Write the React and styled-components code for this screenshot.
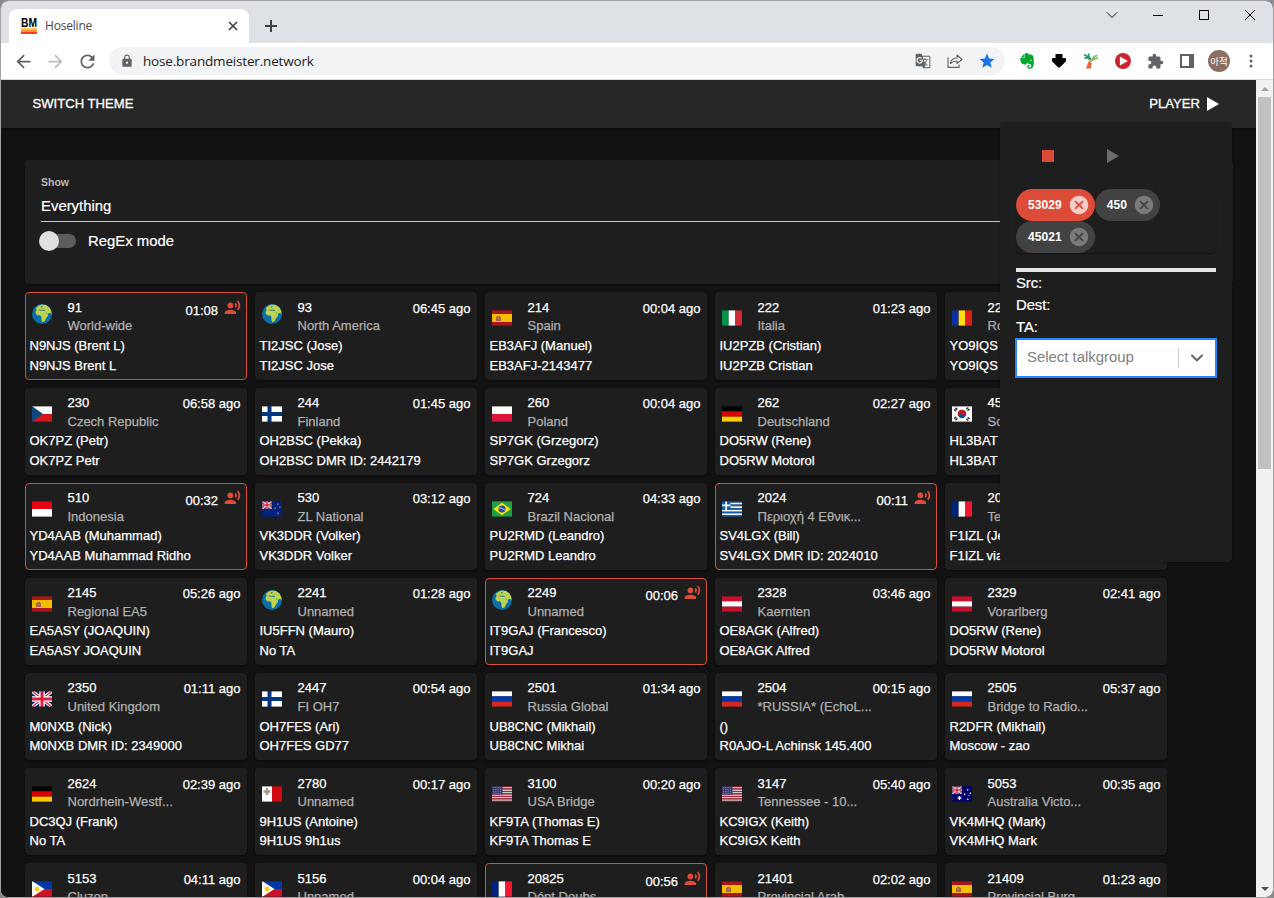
import React from 'react'
import styled, { createGlobalStyle } from 'styled-components'
import {
  MdArrowBack,
  MdArrowForward,
  MdRefresh,
  MdLock,
  MdGTranslate,
  MdStar,
  MdExtension,
  MdRecordVoiceOver,
  MdCancel,
} from 'react-icons/md'
import { SiEvernote } from 'react-icons/si'


const GlobalStyle = createGlobalStyle`
  * { box-sizing: border-box; }
  body {
    margin: 0;
    overflow: hidden;
    background: #8a8a8c;
    font-family: "Liberation Sans", Arial, sans-serif;
  }
`

const Window = styled.div`
  width: 1274px;
  height: 898px;
  display: flex;
  flex-direction: column;
  overflow: hidden;
  border: 1px solid #a3a3a5;
  border-radius: 8px;
  background: #121212;
`

/* browser chrome */

const TabStrip = styled.div`
  height: 42px;
  flex: none;
  display: flex;
  align-items: flex-end;
  background: #dee1e6;
  padding-left: 8px;
`

const Tab = styled.div`
  width: 240px;
  height: 34px;
  display: flex;
  align-items: center;
  padding: 0 10px 0 12px;
  border-radius: 8px 8px 0 0;
  background: #fff;
`

const TabTitle = styled.span`
  flex: 1;
  margin-left: 8px;
  padding-bottom: 1px;
  font: 12px "Open Sans", sans-serif;
  letter-spacing: -0.2px;
  color: #45484c;
`

const NewTab = styled.div`
  width: 44px;
  height: 34px;
  display: flex;
  align-items: center;
  justify-content: center;
`

const WindowButtons = styled.div`
  margin-left: auto;
  align-self: flex-start;
  display: flex;
`

const WindowButton = styled.div`
  width: 46px;
  height: 28px;
  display: flex;
  align-items: center;
  justify-content: center;
`

const Toolbar = styled.div`
  height: 37px;
  flex: none;
  display: flex;
  align-items: center;
  padding-left: 6px;
  background: #fff;
  border-bottom: 1px solid #d5d7da;
`

const Slot = styled.div`
  width: 32px;
  height: 28px;
  flex: none;
  display: flex;
  align-items: center;
  justify-content: center;
  color: ${props => props.$color || '#5f6368'};
`

const Omnibox = styled.div`
  width: 896px;
  height: 28px;
  margin: 0 6px;
  display: flex;
  align-items: center;
  padding-left: 10px;
  padding-right: 2px;
  border-radius: 14px;
  background: #f1f3f4;
`

const Lock = styled.div`
  width: 16px;
  display: flex;
  justify-content: center;
  color: #5f6368;
`

const Url = styled.span`
  flex: 1;
  margin-left: 8px;
  font: 13.5px "Open Sans", sans-serif;
  letter-spacing: -0.17px;
  color: #202124;
`

const Avatar = styled.div`
  width: 22px;
  height: 22px;
  display: flex;
  align-items: center;
  justify-content: center;
  border-radius: 50%;
  background: #8d6e63;
  color: #fff;
  font: 9.5px "Noto Sans CJK KR", sans-serif;
`

/* page */

const Viewport = styled.div`
  flex: 1;
  min-height: 0;
  display: flex;
  background: #121212;
`

const Page = styled.div`
  flex: 1;
  position: relative;
  overflow: hidden;
`

const AppBar = styled.div`
  height: 48px;
  display: flex;
  justify-content: space-between;
  align-items: center;
  padding: 0 37px 2px 31.5px;
  background: #272727;
  box-shadow: 0 2px 4px rgba(0, 0, 0, .4);
  color: #fff;
  font-size: 13.1px;
  -webkit-text-stroke: 0.3px #fff;
`

const PlayerToggle = styled.div`
  display: flex;
  align-items: center;
  gap: 7px;

  svg { margin-top: 2px; }
`

const Filter = styled.div`
  width: 1208px;
  height: 124px;
  margin: 32px 0 0 24px;
  padding: 16px;
  border-radius: 4px;
  background: #1e1e1e;
  box-shadow: 0 1px 2px rgba(0, 0, 0, .5);
  color: #fff;
`

const FieldLabel = styled.div`
  font-size: 10.5px;
  font-weight: bold;
  line-height: 13px;
  color: #b7b7b7;
`

const FieldValue = styled.div`
  height: 33px;
  padding-top: 8px;
  border-bottom: 1px solid #c7c7c7;
  font-size: 14.9px;
  line-height: 18px;
  -webkit-text-stroke: 0.2px;
`

const SwitchRow = styled.div`
  display: flex;
  align-items: center;
  margin-top: 8px;
  height: 22px;
  font-size: 14.9px;
  -webkit-text-stroke: 0.2px;
`

const Track = styled.div`
  width: 35px;
  height: 14px;
  margin: 0 12px 0 0;
  display: flex;
  align-items: center;
  border-radius: 7px;
  background: #5c5c5c;
`

const Thumb = styled.div`
  width: 20px;
  height: 20px;
  margin-left: -2px;
  border-radius: 50%;
  background: #e0e0e0;
`

const Grid = styled.div`
  display: grid;
  grid-template-columns: repeat(5, 222px);
  grid-auto-rows: 87.1px;
  gap: 8px;
  margin: 8.45px 0 0 24px;
`

const CardBox = styled.div`
  padding: 5.62px 5.5px 0 3.5px;
  border: 1px solid ${props => (props.$active ? '#dd4b39' : 'transparent')};
  border-radius: 4px;
  background: #1e1e1e;
  box-shadow: 0 1px 2px rgba(0, 0, 0, .5);
  color: #fff;
  font-size: 13px;
  -webkit-text-stroke: 0.25px;
  overflow: hidden;
`

const CardHead = styled.div`
  display: flex;
  height: 37.14px;
`

const FlagSlot = styled.div`
  width: 38px;
  flex: none;
  padding: ${props => (props.$round ? '5.3px' : '11.4px')} 0 0 2.5px;

  svg { display: block; }
`

const Names = styled.div`
  flex: 1;
  white-space: nowrap;
`

const Number = styled.div`
  line-height: 18.4px;
`

const GroupName = styled.div`
  line-height: 18.4px;
  color: #b0b0b0;
`

const Time = styled.div`
  display: flex;
  padding-top: ${props => (props.$active ? '3px' : '1px')};
  line-height: 18px;
  gap: 6px;

  svg {
    flex: none;
    color: #dd4b39;
    margin: -3px -0.5px 0 0;
  }
`

const CardLine = styled.div`
  line-height: 19.7px;
  white-space: nowrap;
`

/* player drop-down, lies over the page */

const Player = styled.div`
  position: absolute;
  left: 999px;
  top: 42px;
  width: 232px;
  height: 440px;
  padding: 16px 16px 0;
  border-radius: 4px;
  background: #1e1e1e;
  box-shadow: 0 1px 2px rgba(0, 0, 0, .25);
  color: #fff;
`

const Controls = styled.div`
  height: 51px;
  display: flex;
`

const Control = styled.div`
  width: ${props => props.$width}px;
  height: 36px;
  display: flex;
  align-items: center;
  justify-content: center;
`

const StopSquare = styled.div`
  width: 12px;
  height: 12px;
  background: #dd4b39;
`

const Chips = styled.div`
  display: flex;
  flex-wrap: wrap;
  border-radius: 4px;
  box-shadow: 0 1px 1px rgba(0, 0, 0, .35);
`

const Chip = styled.div`
  height: 32px;
  display: flex;
  align-items: center;
  gap: 6.2px;
  padding: 0 5px 0 12px;
  border-radius: 16px;
  background: ${props => (props.$active ? '#dd4b39' : '#424242')};
  font-size: 12.1px;
  font-weight: bold;

  svg { color: ${props => (props.$active ? '#f5cdc8' : '#7a7a7a')}; }
`

const Meter = styled.div`
  height: 4px;
  margin: 15px 0 0;
  background: #e6e6e6;
`

const Info = styled.div`
  font-size: 14.9px;
  line-height: 22px;
  letter-spacing: -0.1px;
  -webkit-text-stroke: 0.2px;
`

const Select = styled.div`
  height: 40px;
  margin: 0 -1px;
  display: flex;
  align-items: center;
  border: 2px solid #2684ff;
  background: #fff;
`

const Placeholder = styled.span`
  flex: 1;
  padding: 0 0 2px 10px;
  font-size: 14.9px;
  color: #808080;
`

const Separator = styled.span`
  width: 1px;
  height: 20px;
  background: #ccc;
`

const Chevron = styled.span`
  width: 36px;
  display: flex;
  justify-content: center;
`

const ScrollBar = styled.div`
  width: 17px;
  display: flex;
  flex-direction: column;
  align-items: center;
  background: #f1f1f1;
`

const ScrollArrow = styled.div`
  height: 17px;
  display: flex;
  align-items: center;
`

const ScrollThumb = styled.div`
  width: 13px;
  height: 372px;
  margin-bottom: auto;
  background: #c1c1c1;
`


const bands = (...colors) => colors.map((c, i) => (
  <rect key={i} y={(i * 16) / colors.length} width="20" height={16 / colors.length} fill={c} />
))

const pales = (...colors) => colors.map((c, i) => (
  <rect key={i} x={(i * 20) / colors.length} width={20 / colors.length} height="16" fill={c} />
))

const Jack = ({ w, h }) => (
  <svg width={w} height={h} viewBox="0 0 20 16" preserveAspectRatio="none">
    <rect width="20" height="16" fill="#012169" />
    <path d="M0 0L20 16M20 0L0 16" stroke="#fff" strokeWidth="3.4" />
    <path d="M0 0L20 16M20 0L0 16" stroke="#d8203c" strokeWidth="1.3" />
    <path d="M10 0V16M0 8H20" stroke="#fff" strokeWidth="5.4" />
    <path d="M10 0V16M0 8H20" stroke="#d8203c" strokeWidth="3" />
  </svg>
)

const flags = {
  es: <>
    <rect width="20" height="16" fill="#aa151b" />
    <rect y="4" width="20" height="8" fill="#f1bf00" />
    <path d="M4 7h1v-1h3v1h1v4H4z" fill="#b5603a" />
    <rect x="5.6" y="7.4" width="1.6" height="2" fill="#9a8b91" />
  </>,
  it: pales('#009246', '#fff', '#ce2b37'),
  ro: pales('#0a2f9f', '#ffdd10', '#dd2016'),
  fr: pales('#00247d', '#fff', '#f31830'),
  pl: bands('#fff', '#dc143c'),
  id: bands('#e70011', '#fff'),
  de: bands('#000', '#dd0000', '#ffce00'),
  at: bands('#c8102e', '#fff', '#c8102e'),
  ru: bands('#fff', '#0039a6', '#d52b1e'),
  cz: <>
    {bands('#fff', '#d7141a')}
    <path d="M0 0L11 8L0 16z" fill="#11457e" />
  </>,
  fi: <>
    <rect width="20" height="16" fill="#fff" />
    <path d="M7.5 0V16M0 8H20" stroke="#003580" strokeWidth="4" />
  </>,
  kr: <>
    <rect width="20" height="16" fill="#fff" />
    <circle cx="10" cy="8" r="4.2" fill="#1050a0" />
    <path d="M6.400 10.200a4.200 4.200 0 1 1 7.400 -.8q-1.600 1-3.600-1.200t-3.800 2" fill="#d0141c" />
    <path d="M2.600 4.800L5.200 1.800M14.800 1.800L17.400 4.800M2.600 11.200L5.200 14.200M14.800 14.200L17.400 11.200" stroke="#333" strokeWidth="2.6" strokeDasharray="1.500 .5" />
  </>,
  gr: <>
    {bands('#0d5eaf', '#fff', '#0d5eaf', '#fff', '#0d5eaf', '#fff', '#0d5eaf', '#fff', '#0d5eaf')}
    <rect width="8.5" height="8.9" fill="#0d5eaf" />
    <path d="M4.2 0V8.9M0 4.4H8.5" stroke="#fff" strokeWidth="1.7" />
  </>,
  br: <>
    <rect width="20" height="16" fill="#229e45" />
    <path d="M10 1.800L18.600 8L10 14.200L1.400 8z" fill="#f8e509" />
    <circle cx="10" cy="8" r="3.6" fill="#2b49a3" />
    <path d="M6.800 6.900q3-.4 6.200 2.400" stroke="#e8eef4" strokeWidth=".8" fill="none" />
  </>,
  nz: <>
    <rect width="20" height="16" fill="#00247d" />
    <Jack w={10} h={8} />
    <path d="M15 2.5h1.6v1.6H15zM12.4 6.4H14V8h-1.6zM17 5.6h1.5v1.5H17zM15 11.6h1.7v1.7H15z" fill="#c8506c" />
  </>,
  au: <>
    <rect width="20" height="16" fill="#00006a" />
    <Jack w={10} h={8} />
    <path d="M5.500 12h4M7.500 10v4M6.200 10.700l2.600 2.600M8.800 10.700l-2.600 2.600" stroke="#fff" strokeWidth="1" />
    <path d="M15 3h1.4v1.4H15zM12 7.600h1.4V9H12zM17.600 6.600H19V8h-1.400zM15 12.500h1.500v1.500H15zM16.600 9h1v1h-1z" fill="#dfe0f0" />
  </>,
  gb: <Jack w={20} h={16} />,
  us: <>
    {bands('#b22234', '#f2e8ea', '#b22234', '#f2e8ea', '#b22234', '#f2e8ea', '#b22234', '#f2e8ea', '#b22234', '#f2e8ea', '#b22234', '#f2e8ea', '#b22234')}
    <rect width="10.5" height="8.6" fill="#3c3b6e" />
    <path d="M1 1.6H10M1 3.6H10M1 5.6H10M1 7.4H10" stroke="#9fa5c9" strokeWidth=".7" strokeDasharray=".8 1" />
  </>,
  mt: <>
    {pales('#fff', '#cf0a10')}
    <path d="M5 2v7M1.5 5.5h7" stroke="#a99585" strokeWidth="2.4" />
  </>,
  ph: <>
    {bands('#0038a8', '#ce1126')}
    <path d="M0 0L12.500 8L0 16z" fill="#fff" />
    <circle cx="5" cy="8" r="2.4" fill="#fcc917" />
  </>,
}

const Flag = ({ code }) => {
  if (code === 'world') {
    return (
      <svg width="20" height="20" viewBox="0 0 20 20">
        <circle cx="10" cy="10" r="10" fill="#0c6ea6" />
        <path
          d="M4.200 3.800L6.500 1.800L9.500 .4L14 1L17.500 3.600L19.400 7.500L19.500 10.500L18.300 8.800L17 8.900L15.800 10.300L16 12L14 14.200L12.600 17.300L10.500 18.300L9.600 16.800L9.300 12.800L8 11.200L5.600 11.400L3.600 9.400L3.700 7.200L5.200 5.800L4 5.400z"
          fill="#bfd44e"
        />
        <path d="M6 6.100L8 5.300L9.300 6.100L11 5.500L13 6L12.600 6.900L9 6.800zM9 2.300L10.800 1.700L10.200 3.400L8.800 3.700zM13.600 7.600L15 9.600L14.300 9.800z" fill="#2f7f93" />
      </svg>
    )
  }
  return (
    <svg width="20" height="16" viewBox="0 0 20 16">
      {flags[code]}
      <path d="M0 .5H20M0 15.5H20" stroke="#1e1e1e" strokeOpacity=".4" />
    </svg>
  )
}

// [flag, talkgroup, name, time, caller, talker alias, on air]
const groups = [
  ['world', '91', 'World-wide', '01:08', 'N9NJS (Brent L)', 'N9NJS Brent L', true],
  ['world', '93', 'North America', '06:45', 'TI2JSC (Jose)', 'TI2JSC Jose'],
  ['es', '214', 'Spain', '00:04', 'EB3AFJ (Manuel)', 'EB3AFJ-2143477'],
  ['it', '222', 'Italia', '01:23', 'IU2PZB (Cristian)', 'IU2PZB Cristian'],
  ['ro', '22', 'Ro', '', 'YO9IQS', 'YO9IQS'],
  ['cz', '230', 'Czech Republic', '06:58', 'OK7PZ (Petr)', 'OK7PZ Petr'],
  ['fi', '244', 'Finland', '01:45', 'OH2BSC (Pekka)', 'OH2BSC DMR ID: 2442179'],
  ['pl', '260', 'Poland', '00:04', 'SP7GK (Grzegorz)', 'SP7GK Grzegorz'],
  ['de', '262', 'Deutschland', '02:27', 'DO5RW (Rene)', 'DO5RW Motorol'],
  ['kr', '45', 'So', '', 'HL3BAT', 'HL3BAT'],
  ['id', '510', 'Indonesia', '00:32', 'YD4AAB (Muhammad)', 'YD4AAB Muhammad Ridho', true],
  ['nz', '530', 'ZL National', '03:12', 'VK3DDR (Volker)', 'VK3DDR Volker'],
  ['br', '724', 'Brazil Nacional', '04:33', 'PU2RMD (Leandro)', 'PU2RMD Leandro'],
  ['gr', '2024', 'Περιοχή 4 Εθνικ...', '00:11', 'SV4LGX (Bill)', 'SV4LGX DMR ID: 2024010', true],
  ['fr', '20', 'Te', '', 'F1IZL (Je', 'F1IZL via'],
  ['es', '2145', 'Regional EA5', '05:26', 'EA5ASY (JOAQUIN)', 'EA5ASY JOAQUIN'],
  ['world', '2241', 'Unnamed', '01:28', 'IU5FFN (Mauro)', 'No TA'],
  ['world', '2249', 'Unnamed', '00:06', 'IT9GAJ (Francesco)', 'IT9GAJ', true],
  ['at', '2328', 'Kaernten', '03:46', 'OE8AGK (Alfred)', 'OE8AGK Alfred'],
  ['at', '2329', 'Vorarlberg', '02:41', 'DO5RW (Rene)', 'DO5RW Motorol'],
  ['gb', '2350', 'United Kingdom', '01:11', 'M0NXB (Nick)', 'M0NXB DMR ID: 2349000'],
  ['fi', '2447', 'FI OH7', '00:54', 'OH7FES (Ari)', 'OH7FES GD77'],
  ['ru', '2501', 'Russia Global', '01:34', 'UB8CNC (Mikhail)', 'UB8CNC Mikhai'],
  ['ru', '2504', '*RUSSIA* (EchoL...', '00:15', '()', 'R0AJO-L Achinsk 145.400'],
  ['ru', '2505', 'Bridge to Radio...', '05:37', 'R2DFR (Mikhail)', 'Moscow - zao'],
  ['de', '2624', 'Nordrhein-Westf...', '02:39', 'DC3QJ (Frank)', 'No TA'],
  ['mt', '2780', 'Unnamed', '00:17', '9H1US (Antoine)', '9H1US 9h1us'],
  ['us', '3100', 'USA Bridge', '00:20', 'KF9TA (Thomas E)', 'KF9TA Thomas E'],
  ['us', '3147', 'Tennessee - 10...', '05:40', 'KC9IGX (Keith)', 'KC9IGX Keith'],
  ['au', '5053', 'Australia Victo...', '00:35', 'VK4MHQ (Mark)', 'VK4MHQ Mark'],
  ['ph', '5153', 'Cluzon', '04:11', '', ''],
  ['ph', '5156', 'Unnamed', '00:04', '', ''],
  ['fr', '20825', 'Dépt Doubs', '00:56', '', '', true],
  ['es', '21401', 'Provincial Arab', '02:02', '', ''],
  ['es', '21409', 'Provincial Burg', '01:23', '', ''],
]

const Card = ({ group }) => {
  const [flag, id, name, time, caller, alias, active] = group
  return (
    <CardBox $active={active}>
      <CardHead>
        <FlagSlot $round={flag === 'world'}><Flag code={flag} /></FlagSlot>
        <Names>
          <Number>{id}</Number>
          <GroupName>{name}</GroupName>
        </Names>
        <Time $active={active}>
          {active ? time : time && `${time} ago`}
          {active && <MdRecordVoiceOver size={17} />}
        </Time>
      </CardHead>
      <CardLine>{caller}</CardLine>
      <CardLine>{alias}</CardLine>
    </CardBox>
  )
}

const Favicon = () => (
  <svg width="16" height="16" viewBox="0 0 16 16">
    <text x="0" y="9" fontFamily="Liberation Sans" fontWeight="bold" fontSize="12" textLength="16" lengthAdjust="spacingAndGlyphs">BM</text>
    <rect y="10" width="16" height="2" fill="#ffc65a" />
    <rect y="12" width="16" height="2" fill="#ff9440" />
    <rect y="14" width="16" height="2" fill="#f0431f" />
  </svg>
)

const BrowserTop = () => (
  <>
    <TabStrip>
      <Tab>
        <Favicon />
        <TabTitle>Hoseline</TabTitle>
        <svg width="12" height="12" viewBox="0 0 12 12" stroke="#3c4043" strokeWidth="1.6">
          <path d="M2 2L10 10M10 2L2 10" />
        </svg>
      </Tab>
      <NewTab>
        <svg width="12" height="12" viewBox="0 0 12 12" stroke="#3c4043" strokeWidth="2">
          <path d="M6 0V12M0 6H12" />
        </svg>
      </NewTab>
      <WindowButtons>
        <WindowButton>
          <svg width="12" height="8" viewBox="0 0 12 8" fill="none" stroke="#111"><path d="M1 1.5L6 6.5L11 1.5" /></svg>
        </WindowButton>
        <WindowButton>
          <svg width="10" height="2" viewBox="0 0 10 2"><rect y="1" width="10" height="1" fill="#000" /></svg>
        </WindowButton>
        <WindowButton>
          <svg width="10" height="10" viewBox="0 0 10 10" fill="none" stroke="#000"><rect x=".5" y=".5" width="9" height="9" /></svg>
        </WindowButton>
        <WindowButton>
          <svg width="10" height="10" viewBox="0 0 10 10" stroke="#000"><path d="M0 0L10 10M10 0L0 10" /></svg>
        </WindowButton>
      </WindowButtons>
    </TabStrip>
    <Toolbar>
      <Slot><MdArrowBack size={21} /></Slot>
      <Slot $color="#babcbe"><MdArrowForward size={21} /></Slot>
      <Slot><MdRefresh size={21} /></Slot>
      <Omnibox>
        <Lock><MdLock size={14} /></Lock>
        <Url>hose.brandmeister.network</Url>
        <Slot><MdGTranslate size={16} /></Slot>
        <Slot>
          <svg width="16" height="14" viewBox="0 0 16 14" fill="none" stroke="#5f6368" strokeWidth="1.1">
            <path d="M1 3.5V13.4H12V10.5" />
            <path d="M3.5 9.5C4 6 6.5 4 10 4V1L15 5.5L10 9.5V7C7.5 7 5.5 7.5 3.5 9.5z" strokeLinejoin="round" />
          </svg>
        </Slot>
        <Slot $color="#1a73e8"><MdStar size={18} /></Slot>
      </Omnibox>
      <Slot $color="#00a82d"><SiEvernote size={16} /></Slot>
      <Slot>
        <svg width="14" height="14" viewBox="0 0 14 14">
          <path d="M3.5 0H10.5V4H13Q14 4 14 5V7.2L8 13.2Q7 14 6 13.2L0 7.2V5Q0 4 1 4H3.5z" fill="#000" />
        </svg>
      </Slot>
      <Slot>
        <svg width="16" height="16" viewBox="0 0 16 16" fill="none">
          <path d="M5 5L7.5 8L6.5 12M12 5L7.5 8.5" stroke="#c4b070" strokeWidth="2" />
          <path d="M1 1.5L3.5 3L6.5 6M6 .5L5.5 3L8 6.5M1.5 5L5.5 4.5" stroke="#2a9d73" strokeWidth="1.8" />
          <path d="M14.5 2.5L11 3.5L9 7M15 5L10.5 6" stroke="#7bb661" strokeWidth="1.6" />
          <path d="M5.5 8.5L3 15.5H8L8.500 10z" fill="#e8653c" />
        </svg>
      </Slot>
      <Slot>
        <svg width="16" height="16" viewBox="0 0 16 16">
          <circle cx="8" cy="8" r="8" fill="#c9242d" />
          <path d="M4.9 3.5L12.8 8L4.9 12.5z" fill="#fff" />
        </svg>
      </Slot>
      <Slot><MdExtension size={17} /></Slot>
      <Slot>
        <svg width="14" height="14" viewBox="0 0 14 14">
          <path fillRule="evenodd" d="M0 0H14V14H0zM2 2V12H9V2z" fill="#5f6368" />
        </svg>
      </Slot>
      <Slot><Avatar>아적</Avatar></Slot>
      <Slot>
        <svg width="4" height="14" viewBox="0 0 4 14" fill="#5f6368">
          <circle cx="2" cy="2" r="1.5" /><circle cx="2" cy="7" r="1.5" /><circle cx="2" cy="12" r="1.5" />
        </svg>
      </Slot>
    </Toolbar>
  </>
)

const PlayerPanel = () => (
  <Player>
    <Controls>
      <Control $width={64}><StopSquare /></Control>
      <Control $width={66}>
        <svg width="12" height="14" viewBox="0 0 12 14"><path d="M0 0L12 7L0 14z" fill="#6c6c6c" /></svg>
      </Control>
    </Controls>
    <Chips>
      <Chip $active>53029<MdCancel size={22} /></Chip>
      <Chip>450<MdCancel size={22} /></Chip>
      <Chip>45021<MdCancel size={22} /></Chip>
    </Chips>
    <Meter />
    <Info>Src:</Info>
    <Info>Dest:</Info>
    <Info>TA:</Info>
    <Select>
      <Placeholder>Select talkgroup</Placeholder>
      <Separator />
      <Chevron>
        <svg width="12" height="8" viewBox="0 0 12 8" fill="none" stroke="#666" strokeWidth="2">
          <path d="M1 1.5L6 6.3L11 1.5" strokeLinecap="round" />
        </svg>
      </Chevron>
    </Select>
  </Player>
)

const App = () => (
  <Window>
    <GlobalStyle />
    <BrowserTop />
    <Viewport>
      <Page>
        <AppBar>
          <span>SWITCH THEME</span>
          <PlayerToggle>
            PLAYER
            <svg width="12" height="14" viewBox="0 0 12 14"><path d="M0 0L12 7L0 14z" fill="#fff" /></svg>
          </PlayerToggle>
        </AppBar>
        <Filter>
          <FieldLabel>Show</FieldLabel>
          <FieldValue>Everything</FieldValue>
          <SwitchRow>
            <Track><Thumb /></Track>
            RegEx mode
          </SwitchRow>
        </Filter>
        <Grid>
          {groups.map(group => <Card key={group[1]} group={group} />)}
        </Grid>
        <PlayerPanel />
      </Page>
      <ScrollBar>
        <ScrollArrow>
          <svg width="8" height="4" viewBox="0 0 8 4"><path d="M4 0L8 4H0z" fill="#a3a3a3" /></svg>
        </ScrollArrow>
        <ScrollThumb />
        <ScrollArrow>
          <svg width="8" height="4" viewBox="0 0 8 4"><path d="M0 0H8L4 4z" fill="#505050" /></svg>
        </ScrollArrow>
      </ScrollBar>
    </Viewport>
  </Window>
)

export default App
